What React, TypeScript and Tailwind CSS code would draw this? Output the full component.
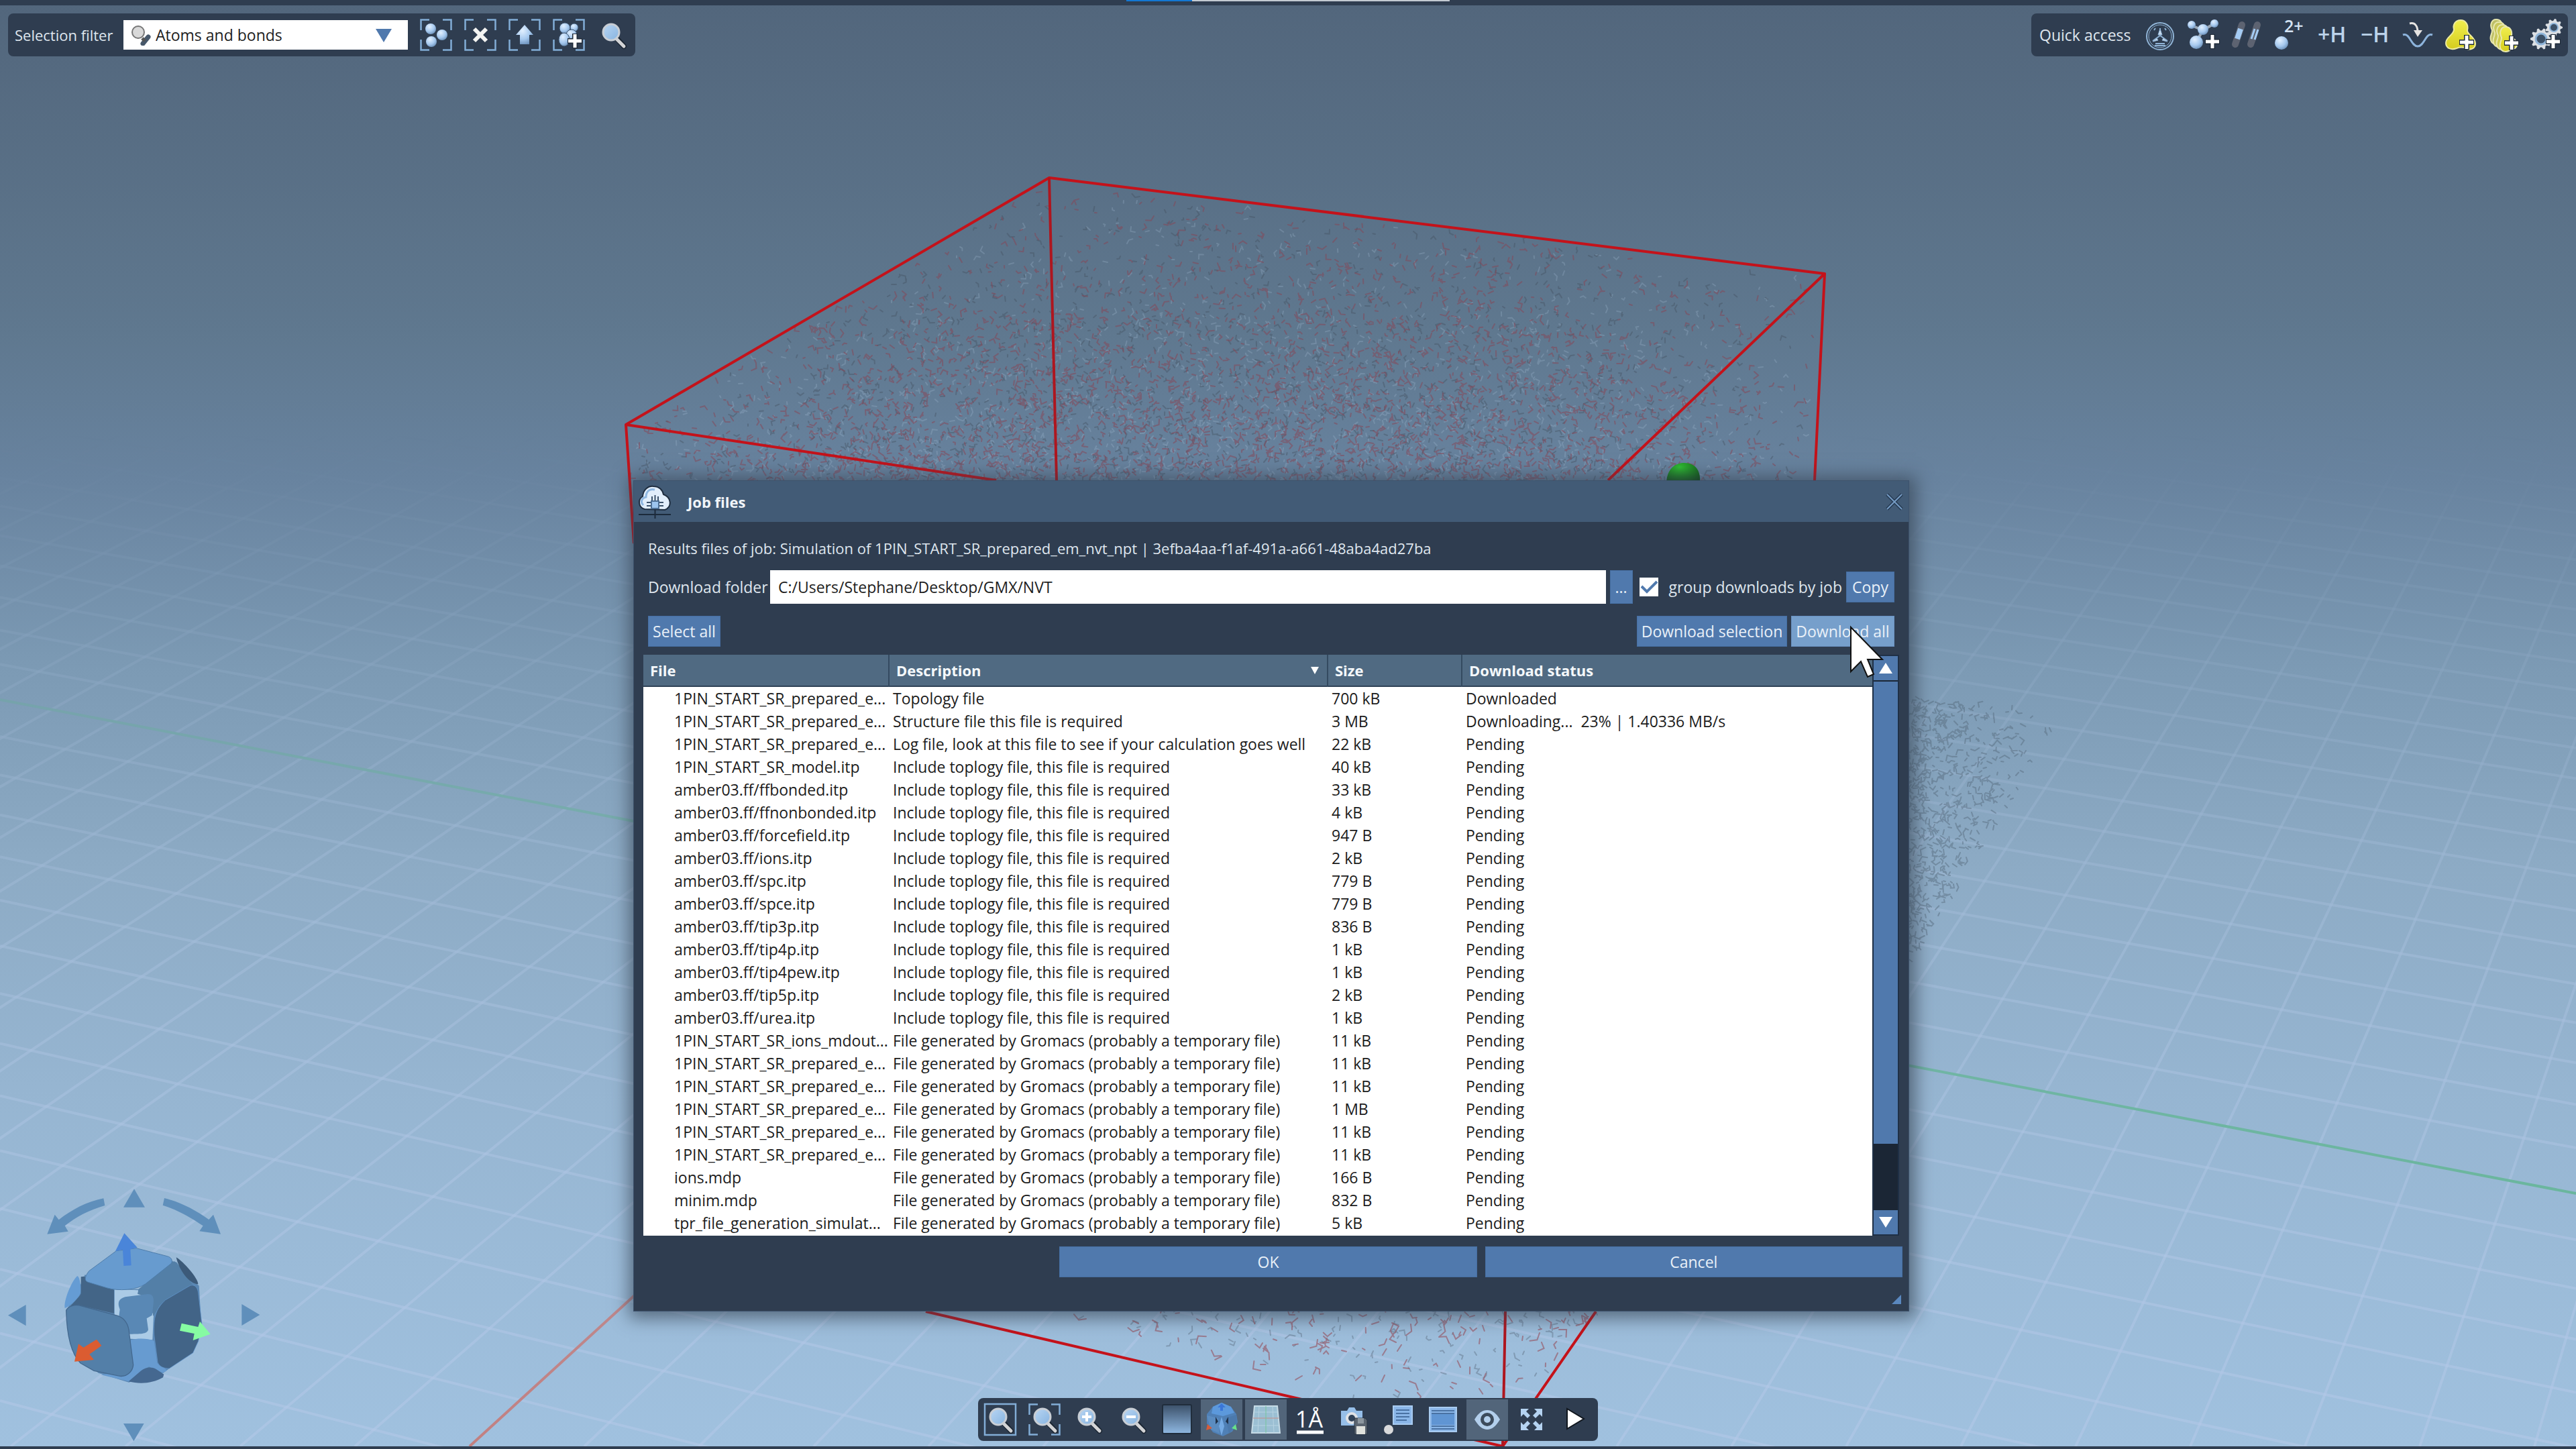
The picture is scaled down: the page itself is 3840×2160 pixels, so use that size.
import React, { useState } from "react";

type JobFile = {
  file: string;
  description: string;
  size: string;
  status: string;
};

const INCLUDE = "Include toplogy file, this file is required";
const GENERATED = "File generated by Gromacs (probably a temporary file)";

const jobFiles: JobFile[] = [
  { file: "1PIN_START_SR_prepared_e...", description: "Topology file", size: "700 kB", status: "Downloaded" },
  { file: "1PIN_START_SR_prepared_e...", description: "Structure file this file is required", size: "3 MB", status: "Downloading...  23% | 1.40336 MB/s" },
  { file: "1PIN_START_SR_prepared_e...", description: "Log file, look at this file to see if your calculation goes well", size: "22 kB", status: "Pending" },
  { file: "1PIN_START_SR_model.itp", description: INCLUDE, size: "40 kB", status: "Pending" },
  { file: "amber03.ff/ffbonded.itp", description: INCLUDE, size: "33 kB", status: "Pending" },
  { file: "amber03.ff/ffnonbonded.itp", description: INCLUDE, size: "4 kB", status: "Pending" },
  { file: "amber03.ff/forcefield.itp", description: INCLUDE, size: "947 B", status: "Pending" },
  { file: "amber03.ff/ions.itp", description: INCLUDE, size: "2 kB", status: "Pending" },
  { file: "amber03.ff/spc.itp", description: INCLUDE, size: "779 B", status: "Pending" },
  { file: "amber03.ff/spce.itp", description: INCLUDE, size: "779 B", status: "Pending" },
  { file: "amber03.ff/tip3p.itp", description: INCLUDE, size: "836 B", status: "Pending" },
  { file: "amber03.ff/tip4p.itp", description: INCLUDE, size: "1 kB", status: "Pending" },
  { file: "amber03.ff/tip4pew.itp", description: INCLUDE, size: "1 kB", status: "Pending" },
  { file: "amber03.ff/tip5p.itp", description: INCLUDE, size: "2 kB", status: "Pending" },
  { file: "amber03.ff/urea.itp", description: INCLUDE, size: "1 kB", status: "Pending" },
  { file: "1PIN_START_SR_ions_mdout...", description: GENERATED, size: "11 kB", status: "Pending" },
  { file: "1PIN_START_SR_prepared_e...", description: GENERATED, size: "11 kB", status: "Pending" },
  { file: "1PIN_START_SR_prepared_e...", description: GENERATED, size: "11 kB", status: "Pending" },
  { file: "1PIN_START_SR_prepared_e...", description: GENERATED, size: "1 MB", status: "Pending" },
  { file: "1PIN_START_SR_prepared_e...", description: GENERATED, size: "11 kB", status: "Pending" },
  { file: "1PIN_START_SR_prepared_e...", description: GENERATED, size: "11 kB", status: "Pending" },
  { file: "ions.mdp", description: GENERATED, size: "166 B", status: "Pending" },
  { file: "minim.mdp", description: GENERATED, size: "832 B", status: "Pending" },
  { file: "tpr_file_generation_simulat...", description: GENERATED, size: "5 kB", status: "Pending" },
];

// ---------- 3D viewport ----------

const HORIZON = -1670;

// grid lines running down to the right, they all meet far away on the left
const gridA: string[] = [];
for (let n = -24; n <= 15; n++) {
  if (n === 0) continue;
  const y0 = 1043 + (53.86 * n) / (1 - 0.01989 * n);
  const slope = (y0 - HORIZON) / 14170;
  gridA.push(`M0 ${y0.toFixed(1)}L3840 ${(y0 + slope * 3840).toFixed(1)}`);
}

// grid lines running up to the right
const gridB: string[] = [];
for (let n = -30; n <= 22; n++) {
  if (n === 0) continue;
  const x0 = 700 + 171 * n;
  const t = (2156 - 400) / (2156 - HORIZON);
  gridB.push(`M${x0} 2156L${(x0 + (4900 - x0) * t).toFixed(1)} 400`);
}

const makeRandom = (start: number) => {
  let seed = start;
  return () => {
    seed = (seed * 1664525 + 1013904223) % 4294967296;
    return seed / 4294967296;
  };
};

type Point = [number, number];

const inside = (x: number, y: number, poly: Point[]) => {
  let hit = false;
  for (let i = 0, j = poly.length - 1; i < poly.length; j = i++) {
    const [xi, yi] = poly[i];
    const [xj, yj] = poly[j];
    if (yi > y !== yj > y && x < ((xj - xi) * (y - yi)) / (yj - yi) + xi) hit = !hit;
  }
  return hit;
};

// water molecules are small bent sticks
const scatter = (
  seed: number,
  count: number,
  poly: Point[],
  length: number,
  weight: (x: number, y: number) => number
) => {
  const rand = makeRandom(seed);
  const xs = poly.map((p) => p[0]);
  const ys = poly.map((p) => p[1]);
  const minX = Math.min(...xs);
  const minY = Math.min(...ys);
  const w = Math.max(...xs) - minX;
  const h = Math.max(...ys) - minY;
  let d = "";
  for (let i = 0; i < count; i++) {
    const x = minX + rand() * w;
    const y = minY + rand() * h;
    const a = rand() * Math.PI * 2;
    const b = a + 0.8 + rand();
    const keep = rand();
    const bent = rand() < 0.4;
    const l = length * (0.4 + rand() * 0.8);
    if (!inside(x, y, poly) || keep > weight(x, y)) continue;
    d += `M${x.toFixed(0)} ${y.toFixed(0)}l${(Math.cos(a) * l).toFixed(1)} ${(Math.sin(a) * l).toFixed(1)}`;
    if (bent) d += `l${(Math.cos(b) * l).toFixed(1)} ${(Math.sin(b) * l).toFixed(1)}`;
  }
  return d;
};

const boxTop: Point[] = [[1564, 275], [2710, 415], [2695, 720], [945, 720], [950, 635]];
const boxBottom: Point[] = [[1560, 1950], [2410, 1950], [2270, 2085], [2000, 2085]];
const boxRight: Point[] = [[2840, 1040], [3090, 1060], [2990, 1210], [2840, 1440]];

const topWeight = (x: number, y: number) => {
  const down = Math.min(1, Math.max(0, (y - 270) / 420));
  const right = Math.max(0.12, (2740 - x) / 500);
  const left = Math.max(0.12, (x - 900 + (y - 633) * 0.9) / 500);
  return (0.1 + 0.9 * Math.pow(down, 1.4)) * Math.min(1, right, left);
};

const waterRed = scatter(7, 8600, boxTop, 7, topWeight);
const waterDark = scatter(23, 4200, boxTop, 6, topWeight);
const waterLight = scatter(51, 3800, boxTop, 6, topWeight);
const bottomWeight = (x: number, y: number) => Math.max(0.1, 1 - (y - 1950) / 150) * Math.min(1, (x - 1450) / 700);
const bottomRed = scatter(91, 420, boxBottom, 10, bottomWeight);
const bottomDark = scatter(37, 380, boxBottom, 7, bottomWeight);
const rightDark = scatter(13, 2000, boxRight, 7, (x) => Math.max(0.04, 1 - (x - 2840) / 190));

const Scene = () => (
  <svg
    aria-hidden="true"
    className="absolute inset-0 h-full w-full"
    viewBox="0 0 3840 2160"
    preserveAspectRatio="xMidYMid slice"
  >
    <defs>
      <linearGradient id="sky" x1="0" y1="0" x2="0" y2="1">
        <stop offset="0" stopColor="#52667c" />
        <stop offset="0.23" stopColor="#5f788f" />
        <stop offset="0.33" stopColor="#68839f" />
        <stop offset="0.46" stopColor="#7c9ab4" />
        <stop offset="0.6" stopColor="#8dabc5" />
        <stop offset="0.75" stopColor="#96b5d1" />
        <stop offset="1" stopColor="#a0c1df" />
      </linearGradient>
      <linearGradient id="fog" x1="0" y1="0" x2="0" y2="1">
        <stop offset="0.3" stopColor="#000" />
        <stop offset="0.45" stopColor="#333" />
        <stop offset="0.65" stopColor="#888" />
        <stop offset="1" stopColor="#fff" />
      </linearGradient>
      <mask id="fogMask" maskUnits="userSpaceOnUse" x="0" y="0" width="3840" height="2160">
        <rect width="3840" height="2160" fill="url(#fog)" />
      </mask>
      <radialGradient id="protein" cx="0.4" cy="0.2" r="0.8">
        <stop offset="0" stopColor="#2fc232" />
        <stop offset="1" stopColor="#0c4c12" />
      </radialGradient>
    </defs>
    <rect width="3840" height="2160" fill="url(#sky)" />
    <g mask="url(#fogMask)" fill="none">
      <path d={gridA.join("")} stroke="#b4c9e8" strokeOpacity="0.55" strokeWidth="4" />
      <path d={gridB.join("")} stroke="#b4c9e8" strokeOpacity="0.55" strokeWidth="4" />
      <path d="M0 1043L3840 1779" stroke="#5cb58c" strokeWidth="4" />
      <path d="M700 2156L1100 1790" stroke="#c27f80" strokeWidth="4" />
    </g>
    <g fill="none" strokeLinecap="round">
      <path d={waterLight} stroke="#a9c1d8" strokeOpacity="0.25" strokeWidth="2" />
      <path d={waterDark} stroke="#43505f" strokeOpacity="0.4" strokeWidth="2" />
      <path d={waterRed} stroke="#8a4453" strokeOpacity="0.5" strokeWidth="2" />
      <path d={bottomDark} stroke="#5d6f82" strokeOpacity="0.45" strokeWidth="2" />
      <path d={bottomRed} stroke="#97606f" strokeOpacity="0.7" strokeWidth="2" />
      <path d={rightDark} stroke="#55687b" strokeOpacity="0.45" strokeWidth="2" />
    </g>
    <path d="M2484 722c0-18 8-30 24-32 20-1 28 12 26 32z" fill="url(#protein)" />
    <g fill="none" stroke="#c4121a" strokeWidth="4" strokeLinejoin="round">
      <path d="M1485 716L933 633L1564 265L2720 408L2397 716" />
      <path d="M933 633L945 810M2720 408L2705 716M1380 1955L2240 2156L2379 1955" />
      <path d="M1564 265L1575 716M2244 1955L2240 2156" stroke="#ae161f" />
    </g>
  </svg>
);

const NavigationCube = () => (
  <svg aria-label="Navigation cube" role="img" viewBox="0 0 1260 1260" className="absolute bottom-0 left-0 h-[420px] w-[420px]">
    <g fill="#5f8fbb">
      <path d="M600 97l48 82h-96zM598 1225l-46-79h92zM36 662l80-47v94zM1162 660l-81-48v96z" />
      <path d="M463 139l6 32c-70 20-128 50-179 91l15 25-94 12 34-87 18 23c60-47 124-80 200-96z" />
      <path d="M735 138l-7 32c64 20 122 52 180 92l-16 24 95 13-33-87-20 22c-66-46-124-76-199-96z" />
    </g>
    {/* body behind the faces, so the sky only shows through the corner gaps */}
    <path d="M380 480L510 545H620L780 420L890 530L900 700L885 780L850 830L730 920L576 962L440 920L330 830L296 640L345 560z" fill="#5a87b3" />
    <path d="M512 545l105 5 70 110-5 112-100-5-70-107z" fill="#abcbe6" />
    <path d="M620 545l150-125 20 5 75 105-150 86-30 50-10-80-60-20z" fill="#537fa7" />
    <path d="M560 580l100-13c22 0 30 12 26 45l-6 50-24 14 7 50c-4 18-25 20-83 20l-20-50-28-30 4-30c-12-30-6-48 24-56z" fill="#5988b5" />
    <path d="M585 772c30-8 74-8 104 4l14 100 45 32-20 12-62-28-90 66-126-30 85-10 50-40z" fill="#679bd0" />
    <path d="M345 487c12-4 20 60 15 75-6 22-48 62-70 68-6-34 30-120 55-143z" fill="#659cd4" />
    <path d="M362 490l16-2 14 24 118 36v106l-162-38-50 24c20-24 58-60 64-75z" fill="#436587" />
    <path d="M520 374l90-12 138 36c18 4 26 20 18 32l-116 92c-40 28-120 32-170 18l-86-26c-18-6-16-24 4-50z" fill="#679bcf" stroke="#4e7dab" strokeWidth="3" />
    <path d="M788 403c32 18 98 94 98 120-40 0-86-64-98-120z" fill="#3c5a79" />
    <path d="M296 640c8-16 30-26 60-22l170 46c34 12 50 44 52 80l18 140c-2 26-26 54-60 50l-116-24-60-34c-50-50-62-150-64-236z" fill="#537fa8" stroke="#44698f" strokeWidth="4" />
    <path d="M852 528c22-4 32 12 35 34l16 140-16 76-24 52-106 70c-22 0-44-6-52-28l-16-122c-4-80 8-116 50-156z" fill="#426487" stroke="#659cd4" strokeWidth="2" />
    <path d="M575 958l56-48c20-18 48-18 66-8l36 24-4 14c-46 26-100 32-154 18z" fill="#456890" />
    <path d="M556 295l58 64-31 8 4 72-34 2-4-72-33 6z" fill="#4a85d9" />
    <path d="M432 770l22 28-54 38 20 25-87 8 18-79 22 16z" fill="#db5c31" />
    <path d="M812 698l74 16 8-24 47 56-78 28 6-30-65-13z" fill="#86fba2" />
  </svg>
);

// ---------- icons ----------

const IconDefs = () => (
  <svg aria-hidden="true" className="absolute h-0 w-0">
    <defs>
      <radialGradient id="ball" cx="0.38" cy="0.3" r="0.75">
        <stop offset="0" stopColor="#e2f0ff" />
        <stop offset="0.6" stopColor="#a5c8ee" />
        <stop offset="1" stopColor="#6a8fb8" />
      </radialGradient>
      <linearGradient id="lens" x1="0" y1="0" x2="1" y2="1">
        <stop offset="0" stopColor="#b9d6f3" />
        <stop offset="1" stopColor="#86b3e0" />
      </linearGradient>
      <linearGradient id="yellow" x1="0" y1="0" x2="0" y2="1">
        <stop offset="0" stopColor="#f1ee4e" />
        <stop offset="1" stopColor="#d4cd1e" />
      </linearGradient>
      <linearGradient id="fade" x1="0" y1="0" x2="0" y2="1">
        <stop offset="0" stopColor="#3b5069" />
        <stop offset="1" stopColor="#8fb8e2" />
      </linearGradient>
    </defs>
  </svg>
);

const Icon = ({ children }: { children: React.ReactNode }) => (
  <svg aria-hidden="true" viewBox="0 0 48 48" className="h-12 w-12 overflow-visible" fill="none">
    {children}
  </svg>
);

const Brackets = () => (
  <path d="M1.5 17V1.5H14M34 1.5h12.500V17M46.500 31v15.500H34M14 46.500H1.500V31" stroke="#82add6" strokeWidth="2.500" />
);

const Plus = ({ x, y }: { x: number; y: number }) => (
  <g transform={`translate(${x} ${y})`}>
    <path d="M0-11V11M-11 0H11" stroke="#1d2937" strokeWidth="8" />
    <path d="M0-10V10M-10 0H10" stroke="#fff" strokeWidth="5" />
  </g>
);

const Lens = ({ sign }: { sign?: string }) => (
  <>
    <path d="M30 30L40 41" stroke="#1b2633" strokeWidth="8" strokeLinecap="round" />
    <path d="M29 30L40 41" stroke="#d3d4d6" strokeWidth="5" strokeLinecap="round" />
    <circle cx="21" cy="20" r="12" fill="url(#lens)" stroke="#c8ced5" strokeWidth="3" />
    {sign && <path d={sign} stroke="#fff" strokeWidth="4" />}
  </>
);

const gearPath = (cx: number, cy: number, r: number, teeth: number) => {
  let d = "";
  for (let i = 0; i < teeth * 4; i++) {
    const a = ((i - 0.5) / (teeth * 4)) * Math.PI * 2;
    const rr = i % 4 < 2 ? r : r * 0.78;
    d += `${i ? "L" : "M"}${(cx + Math.cos(a) * rr).toFixed(1)} ${(cy + Math.sin(a) * rr).toFixed(1)}`;
  }
  return d + "z";
};

const selectionTools = [
  {
    label: "Select atoms",
    icon: (
      <>
        <Brackets />
        <circle cx="16" cy="15" r="8" fill="url(#ball)" />
        <circle cx="33" cy="24" r="8" fill="url(#ball)" />
        <circle cx="17" cy="34" r="8" fill="url(#ball)" />
      </>
    ),
  },
  {
    label: "Clear selection",
    icon: (
      <>
        <Brackets />
        <path d="M15 15L33 33M33 15L15 33" stroke="#f4f4f2" strokeWidth="6" />
      </>
    ),
  },
  {
    label: "Expand selection",
    icon: (
      <>
        <Brackets />
        <path d="M24 9L37 24H31V38H17V24H11z" fill="url(#ball)" />
      </>
    ),
  },
  {
    label: "Add to selection",
    icon: (
      <>
        <Brackets />
        <circle cx="32" cy="13" r="6" fill="url(#ball)" stroke="#3b516b" />
        <circle cx="18" cy="14" r="8" fill="url(#ball)" stroke="#3b516b" />
        <circle cx="28" cy="24" r="8" fill="url(#ball)" stroke="#3b516b" />
        <ellipse cx="17" cy="31" rx="8" ry="10" fill="url(#ball)" stroke="#3b516b" />
        <Plus x={33} y={33} />
      </>
    ),
  },
  { label: "Find", icon: <Lens /> },
];

const blob = "M24 2c8 0 12 8 10 15-1 6 12 10 12 20 0 8-8 10-14 7-5-2-9-2-14 0-8 3-16 0-16-8 0-9 12-12 12-20-2-7 2-14 10-14z";
const lobe = "M19 1c7 0 10 6 9 12 0 4 8 8 8 14 0 5-4 8-9 7-5 6-14 5-16-2-2-6 2-9 2-15-4-8-1-16 6-16z";

const quickTools = [
  {
    label: "Simulate",
    icon: (
      <g stroke="#90b4d6" strokeWidth="2">
        <circle cx="24" cy="26" r="20" />
        <circle cx="24" cy="26" r="17" strokeWidth="1" />
        <path d="M24 14V25L13 33M24 25L35 33M15 17l2-3M31 14l2 3" />
        <path d="M21 24L24 15L27 24zM19 29l-6 5 8-2zM29 29l6 5-8-2z" fill="#c9dbee" strokeWidth="1" />
        <path d="M17 37h14M16 40h16" />
      </g>
    ),
  },
  {
    label: "Build",
    icon: (
      <>
        <path d="M7 10L24 17L41 7M24 17L14 34" stroke="#9ba9b8" strokeWidth="4" />
        <circle cx="7" cy="9" r="6" fill="url(#ball)" />
        <circle cx="41" cy="7" r="6" fill="url(#ball)" />
        <circle cx="24" cy="16" r="8" fill="url(#ball)" />
        <circle cx="14" cy="35" r="10" fill="url(#ball)" />
        <Plus x={38} y={34} />
      </>
    ),
  },
  {
    label: "Bonds",
    icon: (
      <g strokeLinecap="round">
        <path d="M8 38L18 9" stroke="#5d6371" strokeWidth="10" />
        <path d="M31 38L41 9" stroke="#5d6371" strokeWidth="10" />
        <path d="M11 30L16 15" stroke="#a4ccf5" strokeWidth="8" strokeLinecap="butt" />
        <path d="M32 30L37 15" stroke="#a4ccf5" strokeWidth="3" strokeLinecap="butt" />
        <path d="M37 31L42 16" stroke="#a4ccf5" strokeWidth="3" strokeLinecap="butt" />
      </g>
    ),
  },
  {
    label: "Charge",
    icon: (
      <>
        <circle cx="13" cy="36" r="10" fill="url(#ball)" />
        <text x="17" y="20" fill="#d3e2f2" className="text-[25px] font-semibold">2+</text>
      </>
    ),
  },
  { label: "Add hydrogens", icon: <text x="3" y="35" fill="#bcd3ea" className="text-[32px] font-semibold">+H</text> },
  { label: "Remove hydrogens", icon: <text x="3" y="35" fill="#bcd3ea" className="text-[32px] font-semibold">−H</text> },
  {
    label: "Minimize",
    icon: (
      <>
        <path d="M2 24C12 20 14 41 24 41S36 20 46 24" stroke="#8db4dc" strokeWidth="3" />
        <path d="M12 7C20 5 24 11 24 20" stroke="#e6e4e2" strokeWidth="3" />
        <path d="M18 17H31L24 27z" fill="#e6e4e2" />
      </>
    ),
  },
  {
    label: "Add surface",
    icon: (
      <>
        <path d={blob} fill="url(#yellow)" stroke="#edeb9f" strokeWidth="2" />
        <Plus x={33} y={35} />
      </>
    ),
  },
  {
    label: "Add surfaces",
    icon: (
      <>
        <path d={lobe} transform="translate(-6 0)" fill="#bdbf66" stroke="#e8e7ae" strokeWidth="2" />
        <path d={lobe} transform="translate(-2 4)" fill="#c8c75a" stroke="#e8e7ae" strokeWidth="2" />
        <path d={lobe} transform="translate(3 8)" fill="#cfcd4c" stroke="#e8e7ae" strokeWidth="2" />
        <path d={lobe} transform="translate(8 11)" fill="url(#yellow)" stroke="#e8e7ae" strokeWidth="2" />
        <Plus x={36} y={36} />
      </>
    ),
  },
  {
    label: "Add property",
    icon: (
      <>
        <path d={gearPath(35, 13, 13, 9)} fill="#dbdfe4" />
        <circle cx="35" cy="13" r="6" fill="#3c5067" stroke="#8fb5da" strokeWidth="2" />
        <path d={gearPath(16, 30, 16, 10)} fill="#dbdfe4" />
        <circle cx="16" cy="30" r="8" fill="#3c5067" stroke="#8fb5da" strokeWidth="3" />
        <Plus x={34} y={34} />
      </>
    ),
  },
];

const viewTools = [
  {
    label: "Zoom on all",
    icon: (
      <>
        <rect x="1" y="1" width="46" height="46" stroke="#82add6" strokeWidth="2.500" />
        <Lens />
      </>
    ),
  },
  {
    label: "Zoom on selection",
    icon: (
      <>
        <Brackets />
        <Lens />
      </>
    ),
  },
  { label: "Zoom in", icon: <Lens sign="M21 13V27M14 20H28" /> },
  { label: "Zoom out", icon: <Lens sign="M14 20H28" /> },
  { label: "Background", icon: <rect x="2" y="2" width="43" height="43" rx="2" fill="url(#fade)" stroke="#202d3c" strokeWidth="2" /> },
  {
    label: "Navigation cube",
    active: true,
    icon: (
      <>
        <path d="M24 -1L38 5L46 16L48 28L40 42L26 49L11 43L2 30L2 16L11 5z" fill="#4f80b6" />
        <path d="M24 -1L38 5L43 14L26 19L9 15L11 5z" fill="#5c99dc" />
        <path d="M2 18L19 22L21 45L8 39z" fill="#5b8cc0" />
        <path d="M30 22L46 17L47 30L35 45z" fill="#4b79ac" />
        <path d="M24 20L28 34L24 48L20 34z" fill="#74aae4" />
        <path d="M15 20l4 7-4 4zM34 20l-4 7 4 4z" fill="#20324a" />
        <path d="M24 0l6 6h-4v5h-4V6h-4z" fill="#3a76d8" />
        <path d="M1 40l2-9 7 6z" fill="#d65c3a" />
        <path d="M47 40l-8-3 6-6z" fill="#67e08a" />
      </>
    ),
  },
  {
    label: "Grid",
    active: true,
    icon: (
      <>
        <path d="M7 4H41L45 44H3z" fill="#9bbfd3" stroke="#c6dbe6" strokeWidth="2" />
        <path d="M5 33H43M6 13H42M14 4L12 44M34 4L36 44" stroke="#b7d3e2" />
        <path d="M5 22H43" stroke="#c58d86" />
        <path d="M24 4V44" stroke="#74c69a" />
      </>
    ),
  },
  {
    label: "Scale ruler",
    icon: (
      <>
        <text x="2" y="36" fill="#fff" className="text-[34px]">1Å</text>
        <path d="M4 43H44" stroke="#fff" strokeWidth="5" />
      </>
    ),
  },
  {
    label: "Save screenshot",
    icon: (
      <>
        <path d="M4 11H13L16 6H24L27 11H36V33H4z" fill="#96bfe9" />
        <circle cx="20" cy="22" r="9" fill="#dfe2e6" />
        <circle cx="20" cy="22" r="5" fill="#30435a" />
        <path d="M24 22H40L43 25V46H24z" fill="#5b6570" stroke="#283442" />
        <path d="M27 34H40V46H27z" fill="#dfe1dc" />
        <path d="M29 22H38V30H29z" fill="#8d979f" />
      </>
    ),
  },
  {
    label: "Labels",
    icon: (
      <>
        <rect x="16" y="4" width="28" height="27" fill="#8ab6e8" stroke="#a8cbf0" strokeWidth="2" />
        <path d="M20 10H40M20 15H40M20 20H40M20 25H36" stroke="#4a72a3" strokeWidth="2" />
        <circle cx="9" cy="39" r="7" fill="#d9dadb" />
      </>
    ),
  },
  {
    label: "Text overlay",
    icon: (
      <>
        <rect x="4" y="6" width="40" height="36" fill="#8ab6e8" stroke="#a8cbf0" strokeWidth="2" />
        <rect x="7" y="15" width="34" height="17" fill="#6095d3" />
        <path d="M7 11H41M7 15H41M7 34H41M7 38H41" stroke="#4a72a3" strokeWidth="2" />
      </>
    ),
  },
  {
    label: "Visibility",
    active: true,
    icon: (
      <>
        <path d="M5 24C11 14 17 10 24 10S37 14 43 24C37 34 31 39 24 39S11 34 5 24z" fill="#b3cfec" />
        <circle cx="24" cy="24" r="10" fill="#3c4b5c" />
        <circle cx="24" cy="24" r="5" fill="#b3cfec" />
      </>
    ),
  },
  {
    label: "Full screen",
    icon: (
      <g fill="#b5d3f1">
        <path d="M8 8H20L16 12L22 18L18 22L12 16L8 20z" />
        <path d="M40 8H28L32 12L26 18L30 22L36 16L40 20z" />
        <path d="M8 40H20L16 36L22 30L18 26L12 32L8 28z" />
        <path d="M40 40H28L32 36L26 30L30 26L36 32L40 28z" />
      </g>
    ),
  },
  { label: "Play", icon: <path d="M11 8L36 23L11 38z" fill="#fff" stroke="#10161d" strokeWidth="2" /> },
];

const CloudIcon = () => (
  <svg aria-hidden="true" viewBox="0 0 50 50" className="h-[50px] w-[50px]" fill="none">
    <path d="M10 36C1 34-1 22 7 17C8 6 16 1 23 2C32 2 37 8 38 14C49 18 52 32 40 37z" fill="#e2eefb" stroke="#1f2e40" strokeWidth="2" />
    <path d="M8 30C3 25 6 19 12 18C12 9 18 5 25 7" stroke="#8fb7e0" strokeWidth="3" />
    <rect x="20" y="24" width="11" height="11" fill="#9cc4ee" stroke="#4e6f94" strokeWidth="2" />
    <path d="M21 17v6M25.500 15v8M30 17v6M13 26h6M13 31h6M32 26h6M32 31h6" stroke="#3c526b" strokeWidth="2" />
    <path d="M25.500 36V50M1 44H49" stroke="#1c2a3b" strokeWidth="2" />
  </svg>
);

const blueButton =
  "flex items-center justify-center bg-[#5079ad] text-[#e9f0f8] border border-[#466fa3] hover:bg-[#749dca]";

const JobFilesDialog = () => {
  const [folder, setFolder] = useState("C:/Users/Stephane/Desktop/GMX/NVT");
  const [grouped, setGrouped] = useState(true);

  return (
    <section
      role="dialog"
      aria-labelledby="dialog-title"
      className="absolute left-[944px] right-[994px] top-[716px] border border-[#3d526c] bg-[#2f3d50] shadow-[2px_2px_24px_8px_rgba(50,65,80,0.65)]"
    >
      <header className="flex h-[61px] items-center bg-[#425b76] pl-[6px] pr-2">
        <CloudIcon />
        <h1 id="dialog-title" className="ml-6 text-[22px] font-bold leading-[30px] text-[#f1f5f9]">
          Job files
        </h1>
        <button type="button" aria-label="Close" className="ml-auto">
          <svg aria-hidden="true" viewBox="0 0 26 26" className="h-[26px] w-[26px]">
            <path d="M2 2L24 24M24 2L2 24" stroke="#263a52" strokeWidth="5" />
            <path d="M2 2L24 24M24 2L2 24" stroke="#759bc4" strokeWidth="2" />
          </svg>
        </button>
      </header>

      <div className="px-[21px] pt-6 text-[#dfe6ee]">
        <p className="text-[22px] leading-[30px]">
          Results files of job: Simulation of 1PIN_START_SR_prepared_em_nvt_npt | 3efba4aa-f1af-491a-a661-48aba4ad27ba
        </p>
        <div className="mt-[18px] flex h-[50px] items-center gap-[6px]">
          <label htmlFor="folder" className="w-[176px] whitespace-nowrap">
            Download folder
          </label>
          <input
            id="folder"
            type="text"
            value={folder}
            onChange={(e) => setFolder(e.target.value)}
            className="h-full min-w-0 flex-1 bg-white px-3 text-[#1e1e1e] outline-none"
          />
          <button type="button" className={`${blueButton} h-full w-[34px]`}>
            ...
          </button>
          <label className="flex items-center whitespace-nowrap pl-1">
            <span className="relative mr-4 block h-7 w-7">
              <input
                type="checkbox"
                checked={grouped}
                onChange={(e) => setGrouped(e.target.checked)}
                className="block h-7 w-7 appearance-none bg-white"
              />
              {grouped && (
                <svg aria-hidden="true" viewBox="0 0 28 28" className="pointer-events-none absolute inset-0">
                  <path d="M3 13L11 21L26 6" fill="none" stroke="#5079ad" strokeWidth="4" />
                </svg>
              )}
            </span>
            group downloads by job
          </label>
          <button type="button" className={`${blueButton} h-[46px] w-[72px]`}>
            Copy
          </button>
        </div>
        <div className="mt-[18px] flex h-[46px] gap-[6px]">
          <button type="button" className={`${blueButton} w-[108px]`}>
            Select all
          </button>
          <button type="button" className={`${blueButton} ml-auto w-[224px]`}>
            Download selection
          </button>
          <button
            type="button"
            className="flex w-[154px] items-center justify-center border border-[#6992c2] bg-[#769fcb] text-[#e9f0f8]"
          >
            Download all
          </button>
        </div>
      </div>

      <div className="mx-[14px] mt-3 flex">
        <div className="flex-1 bg-white pb-[2px]">
          <table className="w-full table-fixed border-collapse text-left text-[#1c1c1c]">
            <colgroup>
              <col className="w-[366px]" />
              <col className="w-[654px]" />
              <col className="w-[200px]" />
              <col />
            </colgroup>
            <thead>
              <tr className="h-[47px] border-b-2 border-[#2f4257] bg-[#506a82] text-[22px] text-[#f4f8fb]">
                <th className="border-r-2 border-[#344a60] p-0 pl-[10px] font-bold">File</th>
                <th className="border-r-2 border-[#344a60] p-0 pl-[10px] font-bold">
                  <span className="flex items-center justify-between pr-3">
                    Description
                    <svg aria-hidden="true" viewBox="0 0 12 12" className="h-3 w-3">
                      <path d="M0 1H12L6 12z" fill="#fff" />
                    </svg>
                  </span>
                </th>
                <th className="border-r-2 border-[#344a60] p-0 pl-[10px] font-bold">Size</th>
                <th className="p-0 pl-[10px] font-bold">Download status</th>
              </tr>
            </thead>
            <tbody>
              {jobFiles.map((job, i) => (
                <tr key={i} className="h-[34px] whitespace-pre leading-[34px]">
                  <td className="p-0 pl-[46px]">{job.file}</td>
                  <td className="p-0 pl-[6px]">{job.description}</td>
                  <td className="p-0 pl-[6px]">{job.size}</td>
                  <td className="p-0 pl-[6px]">{job.status}</td>
                </tr>
              ))}
            </tbody>
          </table>
        </div>
        <div className="flex w-10 flex-col gap-[2px] border-2 border-[#1f3046] bg-[#1b2635]">
          <button type="button" aria-label="Scroll up" className="flex h-9 items-center justify-center bg-[#5079ad]">
            <svg aria-hidden="true" viewBox="0 0 20 16" className="h-4 w-5">
              <path d="M10 0L20 16H0z" fill="#fff" />
            </svg>
          </button>
          <div className="h-[689px] bg-[#5079ad]" />
          <button type="button" aria-label="Scroll down" className="mt-auto flex h-9 items-center justify-center bg-[#5079ad]">
            <svg aria-hidden="true" viewBox="0 0 20 16" className="h-4 w-5">
              <path d="M0 0H20L10 16z" fill="#fff" />
            </svg>
          </button>
        </div>
      </div>

      <footer className="mr-[9px] mt-4 grid grid-cols-[1fr_1fr_1fr] gap-3">
        <button type="button" className={`${blueButton} col-start-2 h-[46px]`}>
          OK
        </button>
        <button type="button" className={`${blueButton} h-[46px]`}>
          Cancel
        </button>
      </footer>
      <div className="flex h-[50px] items-end justify-end pb-[10px] pr-[11px]">
        <svg aria-hidden="true" viewBox="0 0 14 14" className="h-[14px] w-[14px]">
          <path d="M14 0V14H0z" fill="#5a88bf" />
        </svg>
      </div>
    </section>
  );
};

const App = () => {
  return (
    <main className="relative flex min-h-screen flex-col overflow-hidden bg-[#7c9ab4] font-['Open_Sans',sans-serif] text-[23px]">
      <IconDefs />
      <Scene />

      <div className="relative flex h-2 justify-center bg-[#2f3d50]">
        <div className="h-[2px] w-[98px] bg-[#1277d3]" />
        <div className="h-[2px] w-96 bg-[#c3cad2]" />
      </div>

      <div className="relative flex items-start justify-between px-3 pt-3">
        <div className="flex h-16 items-center rounded-lg bg-[#2f3d50] pl-[10px] text-[22px] text-[#dfe6ee]">
          <label htmlFor="filter" className="w-[162px] whitespace-nowrap">
            Selection filter
          </label>
          <div className="relative">
            <select id="filter" className="h-11 w-[424px] appearance-none bg-white pl-12 text-[23px] text-[#1e1e1e]">
              <option>Atoms and bonds</option>
            </select>
            <svg aria-hidden="true" viewBox="0 0 30 30" className="pointer-events-none absolute left-[11px] top-2 h-[30px] w-[30px]">
              <path d="M18 27L26 17" stroke="#47586b" strokeWidth="7" strokeLinecap="round" />
              <path d="M17 19L21 23" stroke="#555" strokeWidth="5" />
              <circle cx="11" cy="10" r="9" fill="#d9d9d9" stroke="#777" strokeWidth="2" />
            </svg>
            <svg aria-hidden="true" viewBox="0 0 24 20" className="pointer-events-none absolute right-6 top-[13px] h-5 w-6">
              <path d="M0 0H24L12 20z" fill="#5079ad" />
            </svg>
          </div>
          <div className="ml-[9px] flex">
            {selectionTools.map((tool) => (
              <button key={tool.label} type="button" aria-label={tool.label} className="flex w-[66px] justify-center">
                <Icon>{tool.icon}</Icon>
              </button>
            ))}
          </div>
        </div>

        <div className="flex h-16 items-center rounded-lg bg-[#2f3d50] pl-3 text-[#dfe6ee]">
          <span className="w-[148px] whitespace-nowrap">Quick access</span>
          {quickTools.map((tool) => (
            <button key={tool.label} type="button" aria-label={tool.label} className="flex w-16 justify-center">
              <Icon>{tool.icon}</Icon>
            </button>
          ))}
        </div>
      </div>

      <NavigationCube />

      <div className="relative mb-2 mt-auto flex h-16 items-center self-center rounded-lg bg-[#2f3d50]">
        {viewTools.map((tool) => (
          <button
            key={tool.label}
            type="button"
            aria-label={tool.label}
            className={`mx-[2px] flex h-[60px] w-[62px] items-center justify-center ${tool.active ? "bg-[#52657a]" : ""}`}
          >
            <Icon>{tool.icon}</Icon>
          </button>
        ))}
      </div>
      <div className="relative h-1 bg-[#2f3d50]" />

      <JobFilesDialog />

      <svg aria-hidden="true" viewBox="-3 -3 56 84" className="pointer-events-none absolute left-[2756px] top-[932px] h-[84px] w-14">
        <path d="M0 0V66L15 51L25 74L34 70L25 48H47z" fill="#fff" stroke="#111" strokeWidth="2" />
      </svg>
    </main>
  );
};

export default App;
